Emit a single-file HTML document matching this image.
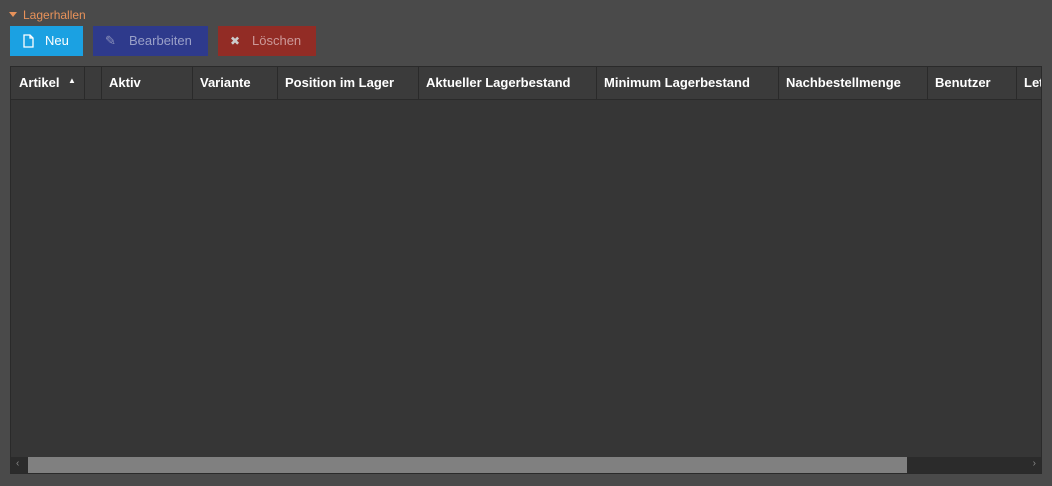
<!DOCTYPE html><html><head><style>
body{margin:0;width:1052px;height:486px;background:#4a4a4a;font-family:"Liberation Sans",sans-serif;position:relative;overflow:hidden}
.t{position:absolute;left:23px;top:8px;font-size:12px;color:#e8925a}
.tri{position:absolute;left:9px;top:12px;width:0;height:0;border-left:4px solid transparent;border-right:4px solid transparent;border-top:5px solid #e8925a}
.b{position:absolute;top:26px;height:30px;font-size:13px;line-height:30px;color:#fff}
.grid{position:absolute;left:10px;top:66px;width:1032px;height:408px;background:#363636;border:1px solid #2a2a2a;box-sizing:border-box;overflow:hidden}
.hd{position:absolute;left:0;top:0;width:1032px;height:32px;background:#3b3b3b;border-bottom:1px solid #2a2a2a}
.h{position:absolute;top:0;height:32px;line-height:32px;font-size:13px;font-weight:bold;color:#fff;border-left:1px solid #2a2a2a;padding-left:7px;box-sizing:border-box;white-space:nowrap}
.sb{position:absolute;left:0;top:390px;width:1030px;height:16px;background:#2b2b2b}
</style></head><body>
<div class="tri"></div><div class="t">Lagerhallen</div>
<div class="b" style="left:10px;width:73px;background:#1ba1e2"><svg style="position:absolute;left:13px;top:8px" width="11" height="14" viewBox="0 0 11 14"><path d="M1 1h6l3 3v9H1z M7 1v3h3" fill="none" stroke="#fff" stroke-width="1.3"/></svg><span style="position:absolute;left:35px">Neu</span></div>
<div class="b" style="left:93px;width:115px;background:#2e3a8c;color:#9aa0c8"><span style="position:absolute;left:12px;top:0;font-size:13px;color:#8c92bb">✎</span><span style="position:absolute;left:36px">Bearbeiten</span></div>
<div class="b" style="left:218px;width:98px;background:#922c25;color:#c99"><span style="position:absolute;left:12px;font-size:12px;color:#ccc">✖</span><span style="position:absolute;left:34px">Löschen</span></div>
<div class="grid"><div class="hd">
<div class="h" style="left:0;width:73px;border-left:none;padding-left:8px">Artikel<span style="position:absolute;left:57px;top:-2px;font-size:8px">▲</span></div>
<div class="h" style="left:73px;width:17px"></div>
<div class="h" style="left:90px;width:91px">Aktiv</div>
<div class="h" style="left:181px;width:85px">Variante</div>
<div class="h" style="left:266px;width:141px">Position im Lager</div>
<div class="h" style="left:407px;width:178px">Aktueller Lagerbestand</div>
<div class="h" style="left:585px;width:182px">Minimum Lagerbestand</div>
<div class="h" style="left:767px;width:149px">Nachbestellmenge</div>
<div class="h" style="left:916px;width:89px">Benutzer</div>
<div class="h" style="left:1005px;width:26px">Letzte</div>
</div>
<div class="sb"><div style="position:absolute;left:17px;top:0;width:879px;height:16px;background:#808080"></div><span style="position:absolute;left:5px;top:1px;font-size:10px;color:#888">‹</span><span style="position:absolute;right:5px;top:1px;font-size:10px;color:#888">›</span></div>
</div>
</body></html>
